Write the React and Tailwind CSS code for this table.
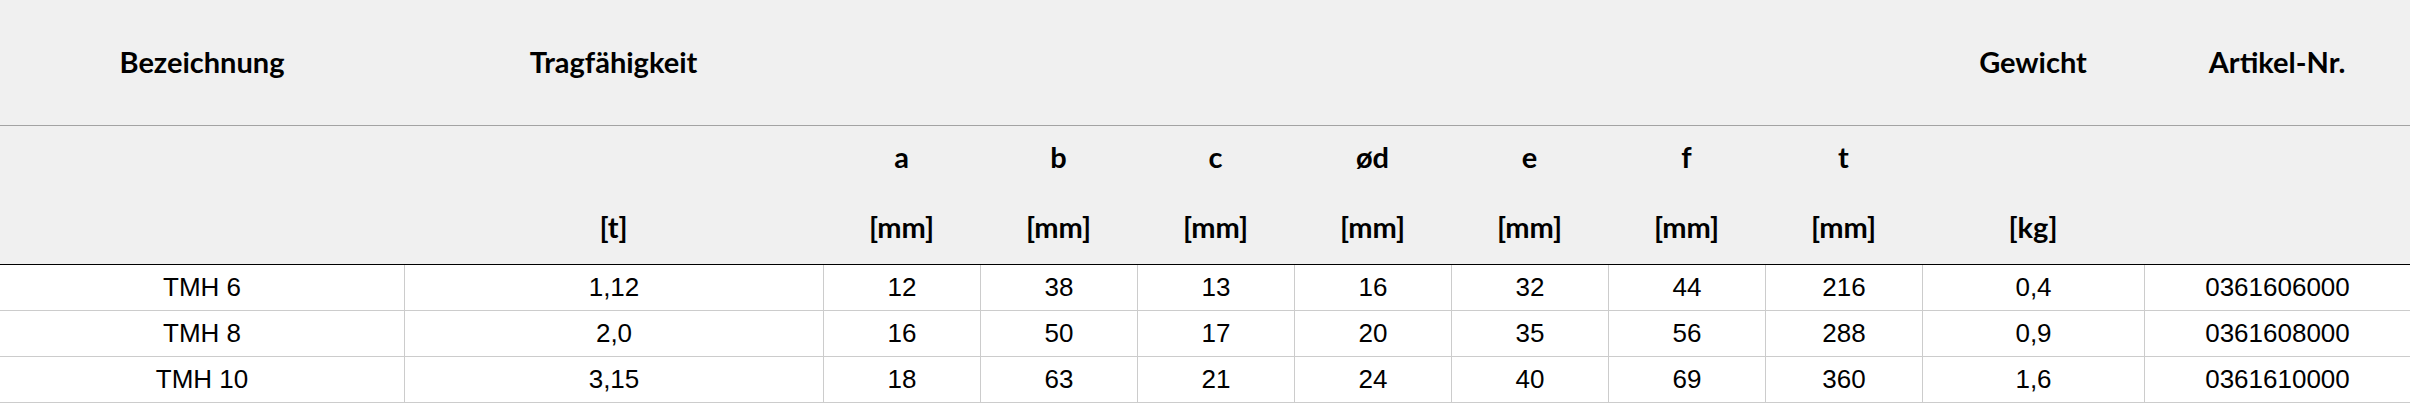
import React from "react";

const cols = "grid grid-cols-[404px_419px_157px_157px_157px_157px_157px_157px_157px_222px_266px]";

const dims = ["a", "b", "c", "ød", "e", "f", "t"];

const rows = [
  ["TMH 6", "1,12", "12", "38", "13", "16", "32", "44", "216", "0,4", "0361606000"],
  ["TMH 8", "2,0", "16", "50", "17", "20", "35", "56", "288", "0,9", "0361608000"],
  ["TMH 10", "3,15", "18", "63", "21", "24", "40", "69", "360", "1,6", "0361610000"],
];

const head = "font-['Lato',sans-serif] font-bold text-[29px] text-black";

function Sub({ top, bottom }) {
  return (
    <div className="flex flex-col items-center pt-[13px]">
      <div className="h-[35px] leading-[35px]">{top}</div>
      <div className="h-[35px]" />
      <div className="h-[35px] leading-[35px]">{bottom}</div>
    </div>
  );
}

export default function App() {
  return (
    <div className="w-[2410px] h-[404px] bg-white">
      <div className={`${cols} h-[126px] bg-[#f0f0f0] border-b border-[#a3a3a3] ${head}`}>
        <div className="flex items-center justify-center pb-[2px]">Bezeichnung</div>
        <div className="flex items-center justify-center pb-[2px]">Tragfähigkeit</div>
        <div className="col-span-7" />
        <div className="flex items-center justify-center pb-[2px]">Gewicht</div>
        <div className="flex items-center justify-center pb-[2px]">Artikel-Nr.</div>
      </div>
      <div className={`${cols} h-[139px] bg-[#f0f0f0] border-b border-black ${head}`}>
        <div />
        <Sub top="" bottom="[t]" />
        {dims.map((d) => (
          <Sub key={d} top={d} bottom="[mm]" />
        ))}
        <Sub top="" bottom="[kg]" />
        <div />
      </div>
      {rows.map((r, i) => (
        <div
          key={i}
          className={`${cols} h-[46px] border-b border-[#cccccc] font-['Liberation_Sans',Arial,sans-serif] text-[26px] text-black`}
        >
          {r.map((c, j) => (
            <div
              key={j}
              className={`flex items-center justify-center ${j > 0 ? "border-l border-[#cccccc]" : ""}`}
            >
              {c}
            </div>
          ))}
        </div>
      ))}
    </div>
  );
}
